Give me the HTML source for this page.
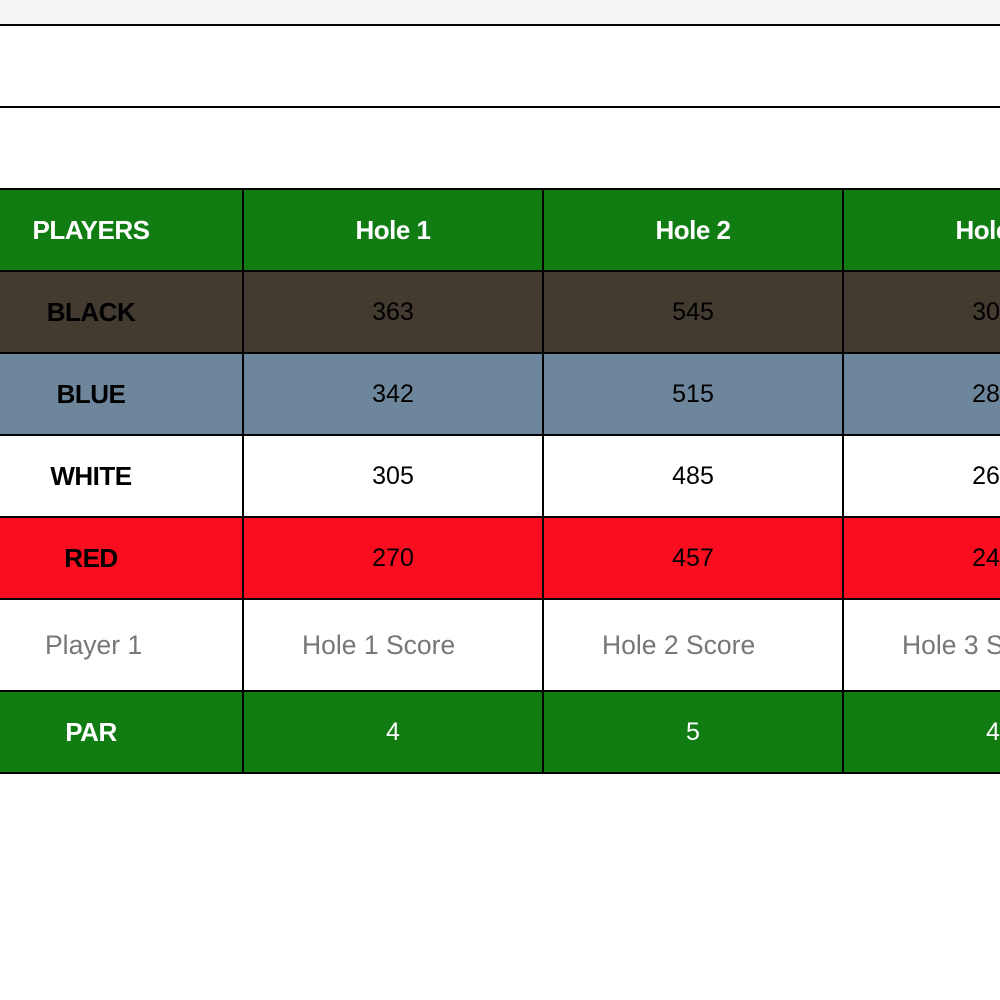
<!DOCTYPE html>
<html><head><meta charset="utf-8"><style>
html,body{margin:0;padding:0;width:1000px;height:1000px;overflow:hidden;background:#fff;font-family:"Liberation Sans",sans-serif}
.a{position:absolute}
.c{position:absolute;display:flex;align-items:center;justify-content:center;box-sizing:border-box}
.b{font-weight:bold;font-size:26px;letter-spacing:-0.5px}
.n{font-size:25px}
.p{font-size:26.5px;color:#777;justify-content:flex-start}
</style></head><body>
<div class="a" style="left:0;top:0;width:1000px;height:24px;background:#f4f4f4"></div>
<div class="a" style="left:0;top:24px;width:1000px;height:2px;background:#000"></div>
<div class="a" style="left:0;top:106px;width:1000px;height:2px;background:#000"></div>
<div id="t"></div>
<script>
var rows=[
 {y:190,h:80,bg:'#107c12',col:'#fff',cells:['PLAYERS','Hole 1','Hole 2','Hole 3'],cls:['b','b','b','b']},
 {y:272,h:80,bg:'#433a30',col:'#000',cells:['BLACK','363','545','300'],cls:['b','n','n','n']},
 {y:354,h:80,bg:'#6e869c',col:'#000',cells:['BLUE','342','515','285'],cls:['b','n','n','n']},
 {y:436,h:80,bg:'#fff',col:'#000',cells:['WHITE','305','485','265'],cls:['b','n','n','n']},
 {y:518,h:80,bg:'#fa0d1e',col:'#000',cells:['RED','270','457','245'],cls:['b','n','n','n']},
 {y:600,h:90,bg:'#fff',col:'#777',cells:['Player 1','Hole 1 Score','Hole 2 Score','Hole 3 Score'],cls:['p','p','p','p']},
 {y:692,h:80,bg:'#107c12',col:'#fff',cells:['PAR','4','5','4'],cls:['b','n','n','n']}
];
var xs=[-58,244,544,844],h='';
rows.forEach(function(r){
 h+='<div class="a" style="left:0;top:'+r.y+'px;width:1000px;height:'+r.h+'px;background:'+r.bg+'"></div>';
 r.cells.forEach(function(t,i){
  var st='left:'+xs[i]+'px;top:'+r.y+'px;width:298px;height:'+r.h+'px;color:'+r.col+';';
  if(r.cls[i]=='p'){st+='padding-left:'+(i==0?103:58)+'px;justify-content:flex-start;white-space:nowrap;';}
  h+='<div class="c '+r.cls[i]+'" style="'+st+'">'+t+'</div>';
 });
});
[188,270,352,434,516,598,690,772].forEach(function(y){h+='<div class="a" style="left:0;top:'+y+'px;width:1000px;height:2px;background:#000"></div>';});
[242,542,842].forEach(function(x){h+='<div class="a" style="left:'+x+'px;top:188px;width:2px;height:586px;background:#000"></div>';});
document.getElementById('t').innerHTML=h;
</script>
</body></html>
